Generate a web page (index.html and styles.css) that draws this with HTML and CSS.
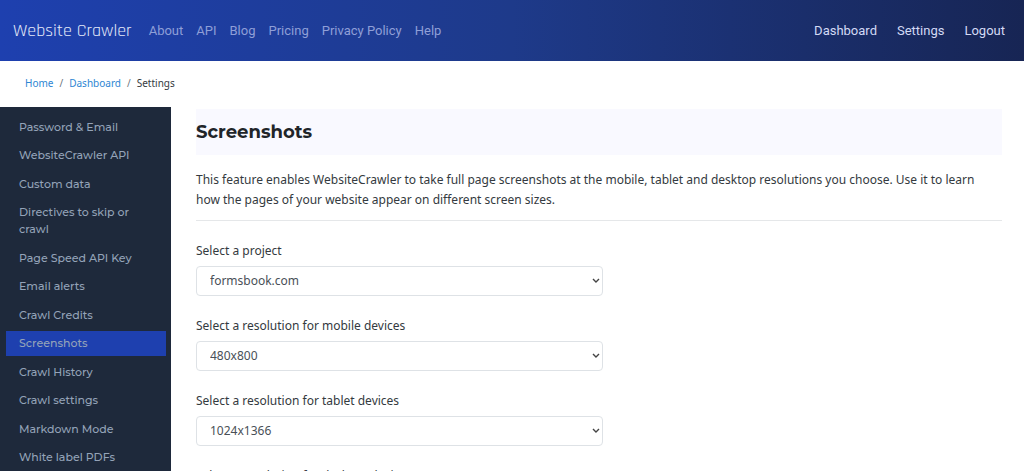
FILE: index.html
```html
<!DOCTYPE html>
<html lang="en">
<head>
    <meta charset="UTF-8">
    <meta name="viewport" content="width=device-width, initial-scale=1.0">
    <title>Settings - Website Crawler</title>
    <link rel="stylesheet" href="styles.css">
</head>
<body>
    <header class="navbar">
        <a class="brand" href="#">Website Crawler</a>
        <nav class="nav-links">
            <a href="#">About</a>
            <a href="#">API</a>
            <a href="#">Blog</a>
            <a href="#">Pricing</a>
            <a href="#">Privacy Policy</a>
            <a href="#">Help</a>
        </nav>
        <nav class="nav-user">
            <a href="#">Dashboard</a>
            <a href="#">Settings</a>
            <a href="#">Logout</a>
        </nav>
    </header>

    <nav class="breadcrumb">
        <a href="#">Home</a>
        <span class="slash">/</span>
        <a href="#">Dashboard</a>
        <span class="slash">/</span>
        <span>Settings</span>
    </nav>

    <div class="page">
        <aside class="sidebar">
            <a href="#">Password &amp; Email</a>
            <a href="#">WebsiteCrawler API</a>
            <a href="#">Custom data</a>
            <a href="#">Directives to skip or crawl</a>
            <a href="#">Page Speed API Key</a>
            <a href="#">Email alerts</a>
            <a href="#">Crawl Credits</a>
            <a href="#" class="active">Screenshots</a>
            <a href="#">Crawl History</a>
            <a href="#">Crawl settings</a>
            <a href="#">Markdown Mode</a>
            <a href="#">White label PDFs</a>
        </aside>

        <main class="content">
            <h1>Screenshots</h1>
            <p class="intro">This feature enables WebsiteCrawler to take full page screenshots at the mobile, tablet and desktop resolutions you choose. Use it to learn how the pages of your website appear on different screen sizes.</p>

            <form class="settings-form">
                <div class="field">
                    <label for="project">Select a project</label>
                    <div class="select-box">
                        <select name="project" id="project">
                            <option>formsbook.com</option>
                        </select>
                        <svg class="chevron" viewBox="0 0 8 6"><path d="M1 1l3 3 3-3"/></svg>
                    </div>
                </div>
                <div class="field">
                    <label for="mobile">Select a resolution for mobile devices</label>
                    <div class="select-box">
                        <select name="mobile" id="mobile">
                            <option>480x800</option>
                        </select>
                        <svg class="chevron" viewBox="0 0 8 6"><path d="M1 1l3 3 3-3"/></svg>
                    </div>
                </div>
                <div class="field">
                    <label for="tablet">Select a resolution for tablet devices</label>
                    <div class="select-box">
                        <select name="tablet" id="tablet">
                            <option>1024x1366</option>
                        </select>
                        <svg class="chevron" viewBox="0 0 8 6"><path d="M1 1l3 3 3-3"/></svg>
                    </div>
                </div>
                <div class="field">
                    <label for="desktop">Select a resolution for desktop devices</label>
                    <div class="select-box">
                        <select name="desktop" id="desktop">
                            <option>1920x1080</option>
                        </select>
                        <svg class="chevron" viewBox="0 0 8 6"><path d="M1 1l3 3 3-3"/></svg>
                    </div>
                </div>
            </form>
        </main>
    </div>
</body>
</html>
```
FILE: styles.css
```css
* {
    box-sizing: border-box;
    margin: 0;
    padding: 0;
}

body {
    display: flex;
    flex-direction: column;
    height: 100vh;
    overflow: hidden;
    background-color: #fff;
    color: #343a40;
    font-family: 'Segoe UI', 'Noto Sans', sans-serif;
    font-size: 12px;
    line-height: 20px;
}

a {
    text-decoration: none;
}

.navbar {
    display: flex;
    align-items: center;
    flex-shrink: 0;
    padding: 20px 19px 20px 13px;
    background: linear-gradient(to right, #1e40af, #1e3a8a 50%, #172554);
    font-family: Roboto, sans-serif;
    font-size: 13px;
}

.brand {
    margin-right: 17px;
    color: #e4e9f8;
    font-family: Rajdhani, Roboto, sans-serif;
    font-size: 18px;
    line-height: 21px;
}

.nav-links {
    display: flex;
    gap: 13px;
}

.nav-links a {
    color: #8f9fd7;
}

.nav-user {
    display: flex;
    gap: 20px;
    margin-left: auto;
}

.nav-user a {
    color: #d3daf5;
}

.breadcrumb {
    display: flex;
    flex-shrink: 0;
    gap: 6px;
    padding: 12px 25px 14px;
    font-size: 10px;
}

.breadcrumb a {
    color: #2e86d3;
}

.slash {
    color: #6c757d;
}

.page {
    display: flex;
    flex: 1;
    min-height: 0;
}

.sidebar {
    display: flex;
    flex-direction: column;
    flex-shrink: 0;
    justify-content: space-between;
    width: 171px;
    padding: 8px 5px 1px 6px;
    background-color: #1e293b;
    font-family: Montserrat, Inter, sans-serif;
    font-size: 11px;
    font-weight: 500;
    line-height: 17px;
}

.sidebar a {
    padding: 4px 13px;
    color: #94a3b8;
}

.sidebar .active {
    background-color: #1e40af;
}

.content {
    flex: 1;
    padding: 2px 22px 0 25px;
}

h1 {
    padding: 11px 0;
    background-color: #f9f9ff;
    color: #212529;
    font-family: Montserrat, Inter, sans-serif;
    font-size: 18px;
    font-weight: 700;
    line-height: 24px;
}

.intro {
    padding: 15px 12px 10px 0;
    border-bottom: 1px solid #e5e7e9;
}

.settings-form {
    display: flex;
    flex-direction: column;
    gap: 20px;
    width: 50%;
    min-width: 407px;
    padding-top: 20px;
}

.field label {
    display: block;
    margin-bottom: 5px;
}

.select-box {
    display: grid;
    align-items: center;
}

.select-box select,
.chevron {
    grid-area: 1 / 1;
}

.select-box select {
    width: 100%;
    height: 30px;
    padding: 0 13px;
    appearance: none;
    background-color: #fff;
    border: 1px solid #dee2e6;
    border-radius: 4px;
    color: #495057;
    font: inherit;
}

.chevron {
    justify-self: end;
    width: 8px;
    height: 6px;
    margin-right: 3px;
    fill: none;
    stroke: #444;
    stroke-width: 1.4;
    pointer-events: none;
}
```
